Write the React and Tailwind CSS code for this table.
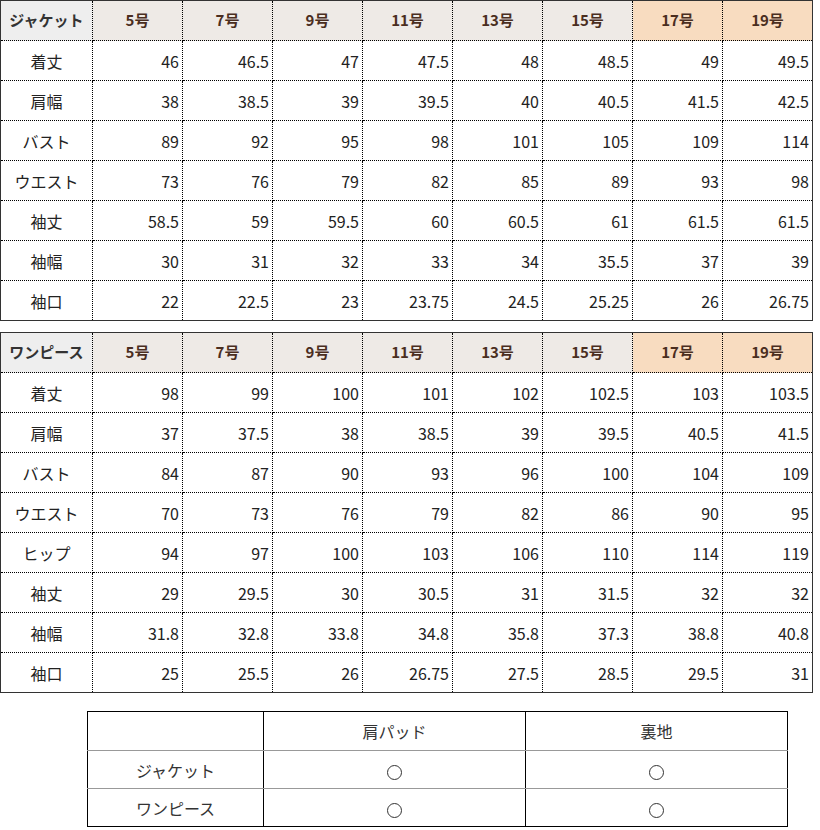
const sizes = ["5号", "7号", "9号", "11号", "13号", "15号", "17号", "19号"];

const jacket = [
  ["着丈", "46", "46.5", "47", "47.5", "48", "48.5", "49", "49.5"],
  ["肩幅", "38", "38.5", "39", "39.5", "40", "40.5", "41.5", "42.5"],
  ["バスト", "89", "92", "95", "98", "101", "105", "109", "114"],
  ["ウエスト", "73", "76", "79", "82", "85", "89", "93", "98"],
  ["袖丈", "58.5", "59", "59.5", "60", "60.5", "61", "61.5", "61.5"],
  ["袖幅", "30", "31", "32", "33", "34", "35.5", "37", "39"],
  ["袖口", "22", "22.5", "23", "23.75", "24.5", "25.25", "26", "26.75"],
];

const onepiece = [
  ["着丈", "98", "99", "100", "101", "102", "102.5", "103", "103.5"],
  ["肩幅", "37", "37.5", "38", "38.5", "39", "39.5", "40.5", "41.5"],
  ["バスト", "84", "87", "90", "93", "96", "100", "104", "109"],
  ["ウエスト", "70", "73", "76", "79", "82", "86", "90", "95"],
  ["ヒップ", "94", "97", "100", "103", "106", "110", "114", "119"],
  ["袖丈", "29", "29.5", "30", "30.5", "31", "31.5", "32", "32"],
  ["袖幅", "31.8", "32.8", "33.8", "34.8", "35.8", "37.3", "38.8", "40.8"],
  ["袖口", "25", "25.5", "26", "26.75", "27.5", "28.5", "29.5", "31"],
];

const font = "font-['MS_PGothic','Noto_Sans_CJK_JP',sans-serif]";

function SizeTable({ title, rows }) {
  return (
    <table className="border-collapse table-fixed w-[812px] border border-[#333]">
      <colgroup>
        <col className="w-[92px]" />
        {sizes.map((s) => (
          <col key={s} className="w-[90px]" />
        ))}
      </colgroup>
      <thead>
        <tr className="h-[40px]">
          <th className="bg-[#eeeeee] border border-dotted border-black text-[15px] font-bold text-[#333] text-center p-0">
            {title}
          </th>
          {sizes.map((s, i) => (
            <th
              key={s}
              className={`border border-dotted border-black text-[15px] font-bold text-[#4a2e1f] text-center p-0 ${
                i >= 6 ? "bg-[#f8dcc0]" : "bg-[#eeeae6]"
              }`}
            >
              {s}
            </th>
          ))}
        </tr>
      </thead>
      <tbody>
        {rows.map((r) => (
          <tr key={r[0]} className="h-[40px]">
            <td className="border border-dotted border-black text-center text-[16px] text-[#222] p-0">
              {r[0]}
            </td>
            {r.slice(1).map((v, i) => (
              <td
                key={i}
                className="border border-dotted border-black text-right text-[16px] text-[#222] pr-[3px] pl-0 py-0"
              >
                {v}
              </td>
            ))}
          </tr>
        ))}
      </tbody>
    </table>
  );
}

// 丸印（○）
function Mark() {
  return (
    <span className="inline-block align-middle w-[15px] h-[15px] rounded-full border border-[#333]"></span>
  );
}

function PartsTable() {
  const rows = ["ジャケット", "ワンピース"];
  return (
    <table className="border-collapse table-fixed w-[700px] border border-black">
      <colgroup>
        <col className="w-[176px]" />
        <col className="w-[262px]" />
        <col className="w-[262px]" />
      </colgroup>
      <tbody>
        <tr className="h-[39px]">
          <td className="border-r border-black border-b border-b-[#999] border-b-dotted p-0"></td>
          <td className="border-r border-black border-b border-b-[#999] border-b-dotted text-center text-[16px] text-[#333] p-0">
            肩パッド
          </td>
          <td className="border-b border-b-[#999] border-b-dotted text-center text-[16px] text-[#333] p-0">
            裏地
          </td>
        </tr>
        {rows.map((name, idx) => {
          const line = idx === 0 ? "border-b border-b-[#999] border-b-dotted" : "";
          return (
            <tr key={name} className="h-[38px]">
              <td className={`border-r border-black text-center text-[16px] text-[#333] p-0 ${line}`}>
                {name}
              </td>
              <td className={`border-r border-black text-center p-0 ${line}`}>
                <Mark />
              </td>
              <td className={`text-center p-0 ${line}`}>
                <Mark />
              </td>
            </tr>
          );
        })}
      </tbody>
    </table>
  );
}

export default function App() {
  return (
    <div className={`bg-white w-[820px] h-[830px] ${font}`}>
      <div className="flex flex-col gap-[11px]">
        <SizeTable title="ジャケット" rows={jacket} />
        <SizeTable title="ワンピース" rows={onepiece} />
      </div>
      <div className="pl-[87px] pt-[18px]">
        <PartsTable />
      </div>
    </div>
  );
}
